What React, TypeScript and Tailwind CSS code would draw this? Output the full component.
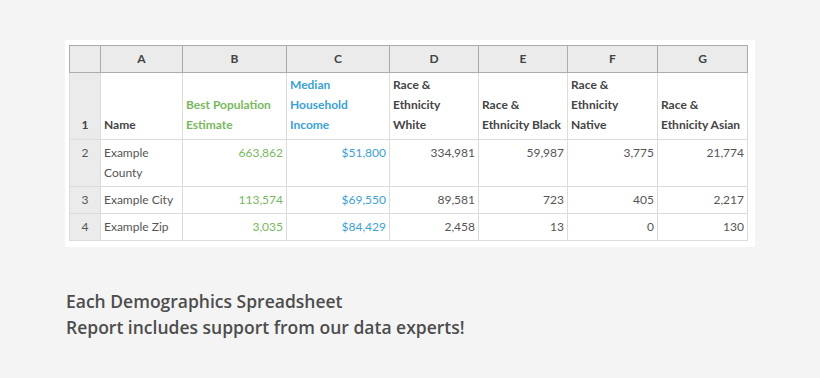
import React from "react";

const cols = [
  { w: 82 },
  { w: 104 },
  { w: 103 },
  { w: 89 },
  { w: 89 },
  { w: 90 },
  { w: 90 },
];

const green = "text-[#78b85e]";
const blue = "text-[#3aa2d4]";

type Row = { n: string; cells: string[] };
const rows: Row[] = [
  { n: "2", cells: ["Example County", "663,862", "$51,800", "334,981", "59,987", "3,775", "21,774"] },
  { n: "3", cells: ["Example City", "113,574", "$69,550", "89,581", "723", "405", "2,217"] },
  { n: "4", cells: ["Example Zip", "3,035", "$84,429", "2,458", "13", "0", "130"] },
];

export default function App() {
  const letters = ["A", "B", "C", "D", "E", "F", "G"];
  const heads = [
    { t: "Name", c: "" },
    { t: "Best Population Estimate", c: green },
    { t: "Median Household Income", c: blue },
    { t: "Race & Ethnicity White", c: "" },
    { t: "Race & Ethnicity Black", c: "" },
    { t: "Race & Ethnicity Native", c: "" },
    { t: "Race & Ethnicity Asian", c: "" },
  ];
  return (
    <div
      className="w-[820px] h-[378px] bg-[#f4f4f4] overflow-hidden"
      style={{ fontFamily: "Lato, 'Open Sans', sans-serif" }}
    >
      <div className="pt-[40px] pl-[65px]">
        <div className="w-[690px] bg-white pt-[5px] pl-[4px] pb-[6px]">
          <table className="table-fixed border-collapse text-[12px] leading-[20px] text-[#555]">
            <colgroup>
              <col style={{ width: 31 }} />
              {cols.map((c, i) => (
                <col key={i} style={{ width: c.w }} />
              ))}
            </colgroup>
            <tbody>
              <tr className="h-[27px] bg-[#ebebeb]">
                <td className="border border-[#acacac]"></td>
                {letters.map((l) => (
                  <td key={l} className="border border-[#acacac] text-center font-bold text-[#444]">
                    {l}
                  </td>
                ))}
              </tr>
              <tr className="h-[67px]">
                <td className="border border-[#dcdcdc] border-t-[#acacac] bg-[#ebebeb] text-center align-bottom pb-[4px] font-bold text-[#444]">
                  1
                </td>
                {heads.map((h, i) => (
                  <td
                    key={i}
                    className={`border border-[#dcdcdc] border-t-[#acacac] align-bottom pl-[3px] pr-[2px] pb-[4px] font-bold ${h.c || "text-[#444]"}`}
                  >
                    {h.t}
                  </td>
                ))}
              </tr>
              {rows.map((r) => (
                <tr key={r.n}>
                  <td className="border border-[#dcdcdc] bg-[#ebebeb] text-center align-top pt-[3px] pb-[3px] text-[#555]">
                    {r.n}
                  </td>
                  {r.cells.map((c, i) => (
                    <td
                      key={i}
                      className={`border border-[#dcdcdc] align-top pt-[3px] pb-[3px] ${
                        i === 0 ? "pl-[3px] pr-[2px]" : "text-right pr-[3px]"
                      } ${i === 1 ? green : i === 2 ? blue : ""}`}
                    >
                      {c}
                    </td>
                  ))}
                </tr>
              ))}
            </tbody>
          </table>
        </div>
        <div
          className="mt-[41px] ml-[1px] text-[17.5px] leading-[26px] font-semibold text-[#4d4d4d]"
          style={{ fontFamily: "'Open Sans', sans-serif" }}
        >
          <div>Each Demographics Spreadsheet</div>
          <div>Report includes support from our data experts!</div>
        </div>
      </div>
    </div>
  );
}
